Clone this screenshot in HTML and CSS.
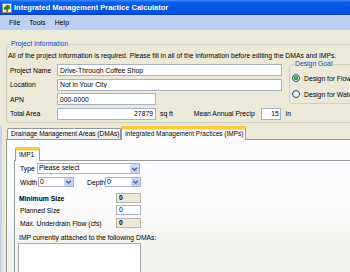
FILE: index.html
```html
<!DOCTYPE html>
<html lang="en">
<head>
    <meta charset="UTF-8">
    <meta name="viewport" content="width=device-width, initial-scale=1.0">
    <title>Integrated Management Practice Calculator</title>
    <link rel="stylesheet" href="styles.css">
</head>
<body>
    <div class="titlebar">
        <svg class="app-icon" width="10" height="10" viewBox="0 0 10 10">
            <rect x="0.5" y="0.5" width="9" height="9" fill="#f3f0e2" stroke="#8c8a7c"/>
            <path d="M1.8 6.2 Q1.2 3.8 3.2 3.4 Q3.8 1.4 5.8 1.9 Q7.9 1.8 8.1 3.8 Q9.1 5.6 7.2 6.4 Q5.6 7.1 4.1 6.6 Q2.5 7.1 1.8 6.2z" fill="#2e8b2a"/>
            <rect x="4.4" y="6" width="1.3" height="3" fill="#7a4b1c"/>
        </svg>
        <span class="title">Integrated Management Practice Calculator</span>
    </div>

    <div class="menubar">
        <span>File</span>
        <span>Tools</span>
        <span>Help</span>
    </div>

    <div class="client">
        <fieldset class="group project">
            <legend>Project Information</legend>
            <p class="intro">All of the project information is required. Please fill in all of the information before editing the DMAs and IMPs.</p>

            <div class="project-grid">
                <div class="fields">
                    <div class="row">
                        <label>Project Name</label>
                        <input class="text wide" value="Drive-Through Coffee Shop">
                    </div>
                    <div class="row">
                        <label>Location</label>
                        <input class="text wide" value="Not in Your City">
                    </div>
                    <div class="row">
                        <label>APN</label>
                        <input class="text short" value="000-0000">
                    </div>
                </div>

                <fieldset class="group goal">
                    <legend>Design Goal</legend>
                    <div class="radio-row"><span class="radio checked"></span>Design for Flow Control</div>
                    <div class="radio-row"><span class="radio"></span>Design for Water Quality</div>
                </fieldset>

                <div class="row area-row">
                    <label>Total Area</label>
                    <input class="text short num" value="27879">
                    <span class="unit">sq ft</span>
                    <span class="precip-label">Mean Annual Precip</span>
                    <input class="text precip num" value="15">
                    <span class="unit-in">in</span>
                </div>
            </div>
        </fieldset>

        <div class="tabs-area">
            <div class="tab-strip">
                <div class="tab dma-tab">Drainage Management Areas (DMAs)</div>
                <div class="tab active imp-tab">Integrated Management Practices (IMPs)</div>
            </div>
            <div class="panel">
                <div class="tab-strip inner">
                    <div class="tab active imp1-tab">IMP1</div>
                </div>
                <div class="inner-panel">
                    <div class="ctl-row">
                        <span class="lbl type-lbl">Type</span>
                        <div class="combo type-combo">
                            <span class="combo-text">Please select</span>
                            <span class="combo-btn"><svg width="7" height="6" viewBox="0 0 7 6"><polyline points="1.2,1.8 3.5,4 5.8,1.8" fill="none" stroke="#4d6185" stroke-width="1.3"/></svg></span>
                        </div>
                    </div>
                    <div class="ctl-row size-row">
                        <span class="lbl width-lbl">Width</span>
                        <div class="combo small-combo">
                            <span class="combo-text">0</span>
                            <span class="combo-btn"><svg width="7" height="6" viewBox="0 0 7 6"><polyline points="1.2,1.8 3.5,4 5.8,1.8" fill="none" stroke="#4d6185" stroke-width="1.3"/></svg></span>
                        </div>
                        <span class="lbl depth-lbl">Depth</span>
                        <div class="combo small-combo">
                            <span class="combo-text">0</span>
                            <span class="combo-btn"><svg width="7" height="6" viewBox="0 0 7 6"><polyline points="1.2,1.8 3.5,4 5.8,1.8" fill="none" stroke="#4d6185" stroke-width="1.3"/></svg></span>
                        </div>
                    </div>

                    <div class="val-row min-row">
                        <span class="val-lbl bold">Minimum Size</span>
                        <span class="val-box readonly">0</span>
                    </div>
                    <div class="val-row planned-row">
                        <span class="val-lbl">Planned Size</span>
                        <span class="val-box editable">0</span>
                    </div>
                    <div class="val-row flow-row">
                        <span class="val-lbl">Max. Underdrain Flow (cfs)</span>
                        <span class="val-box readonly">0</span>
                    </div>

                    <p class="attached">IMP currently attached to the following DMAs:</p>
                    <div class="listbox"></div>
                </div>
            </div>
        </div>
    </div>
</body>
</html>
```

FILE: styles.css
```css
* {
    margin: 0;
    padding: 0;
    box-sizing: border-box;
}

body {
    width: 350px;
    height: 272px;
    overflow: hidden;
    font-family: 'Liberation Sans', Arial, sans-serif;
    font-size: 6.8px;
    line-height: 9px;
    color: #000;
    background: #ece9d8;
}

/* window chrome */
.titlebar {
    height: 15px;
    display: flex;
    align-items: center;
    padding-left: 2px;
    background: linear-gradient(#3d8ef7 0%, #0b5fe8 15%, #0354e4 60%, #0a4fd6 85%, #003fbc 100%);
}

.app-icon {
    margin-right: 2px;
    flex: none;
}

.title {
    color: #fff;
    font-weight: bold;
    font-size: 7.5px;
    white-space: nowrap;
}

.menubar {
    height: 15px;
    display: flex;
    align-items: center;
    gap: 9px;
    padding-left: 9px;
    font-size: 7px;
    background: #bdd0f3;
}

.client {
    padding: 10px 0 0 6px;
}

/* group boxes */
.group {
    border: 1px solid #d0d0bf;
    border-radius: 3px;
    min-width: 0;
}

.group legend {
    color: #0046d5;
    line-height: 8px;
    padding: 0 1px;
}

.project {
    width: 420px;
    padding: 3px 1px 2.5px;
}

.project legend {
    margin-left: 2px;
}

.intro {
    white-space: nowrap;
}

.project-grid {
    display: grid;
    grid-template-columns: 281px 130px;
    row-gap: 2.5px;
    margin-top: 4px;
}

.fields {
    display: flex;
    flex-direction: column;
    gap: 2.5px;
}

.row {
    display: flex;
    align-items: center;
    height: 12px;
    white-space: nowrap;
}

.row label {
    width: 49px;
    padding-left: 2px;
}

.text {
    height: 12px;
    font: inherit;
    color: #000;
    padding: 0 2px;
    border: 1px solid #a7b3c5;
    background: #fff;
    outline: none;
}

.wide {
    width: 225px;
}

.short {
    width: 99px;
}

.num {
    text-align: right;
}

.unit {
    margin-left: 4px;
}

.precip-label {
    margin-left: 21px;
}

.precip {
    width: 20px;
    margin-left: 6px;
    padding: 0 1px;
}

.unit-in {
    margin-left: 5px;
}

.area-row {
    grid-column: 1 / 3;
}

.goal {
    margin-top: -4px;
    height: 44px;
    padding-left: 2px;
}

.goal legend {
    margin-top: 1px;
}

.radio-row {
    display: flex;
    align-items: center;
    gap: 4px;
    height: 10px;
    margin-top: 6px;
    white-space: nowrap;
}

.radio-row:first-of-type {
    margin-top: 5px;
}

.radio {
    width: 8px;
    height: 8px;
    border-radius: 50%;
    border: 1px solid #1c5180;
    background: linear-gradient(135deg, #dcd9cd, #fff);
}

.radio.checked {
    background: radial-gradient(circle, #6ee06a 0, #22a31f 1.4px, #1f8f1d 2px, transparent 2.3px), linear-gradient(135deg, #dcd9cd, #fff);
}

/* tabs */
.tabs-area {
    margin: 3px 0 0 -6px;
    padding-left: 4px;
    border-left: 2px solid #c5d3ee;
    height: 150px;
}

.tab-strip {
    display: flex;
    align-items: flex-end;
    height: 13px;
    padding-left: 1px;
}

.tab {
    height: 11px;
    padding: 0 3px;
    font-size: 6.5px;
    line-height: 10px;
    white-space: nowrap;
    border: 1px solid #919b9c;
    border-bottom: none;
    border-radius: 2px 2px 0 0;
    background: linear-gradient(#fff, #ecebe6);
}

.dma-tab {
    width: 114px;
}

.tab.active {
    position: relative;
    z-index: 1;
    height: 14px;
    margin-bottom: -1px;
    line-height: 10px;
    background: #fcfcfe;
    border-top: 3px solid #ffc83c;
    box-shadow: inset 0 1px 0 #fce7a8;
}

.imp-tab {
    width: 125px;
}

.panel {
    width: 420px;
    height: 140px;
    border: 1px solid #919b9c;
    padding: 9px 0 0 7px;
    background: linear-gradient(#fcfcfe 0, #fcfcfe 60px, #f3f2ec 103px);
}

.tab-strip.inner {
    height: 11px;
}

.imp1-tab {
    width: 25px;
    height: 12px;
    line-height: 8px;
}

.inner-panel {
    height: 120px;
    border: 1px solid #919b9c;
    padding: 2px 0 0 5px;
    background: linear-gradient(#fcfcfe 0, #fcfcfe 40px, #f3f2ec 83px);
}

.ctl-row {
    display: flex;
    align-items: center;
    height: 11px;
    white-space: nowrap;
}

.size-row {
    height: 10px;
    margin-top: 3px;
}

.type-lbl {
    width: 17px;
}

.width-lbl {
    width: 18px;
}

.depth-lbl {
    width: 18px;
    margin-left: 13px;
}

.combo {
    display: flex;
    align-items: stretch;
    height: 100%;
    border: 1px solid #a7b3c5;
    background: #fff;
}

.type-combo {
    width: 103px;
}

.small-combo {
    width: 36px;
}

.combo-text {
    flex: 1;
    padding-left: 1px;
    line-height: 8px;
}

.combo-btn {
    width: 9px;
    display: flex;
    align-items: center;
    justify-content: center;
    border: 1px solid #c7d6f8;
    border-radius: 1px;
    background: linear-gradient(#d2defb, #b4c9f6);
}

.val-row {
    display: flex;
    align-items: center;
    height: 10px;
    white-space: nowrap;
}

.min-row {
    margin-top: 6px;
}

.planned-row {
    margin-top: 2px;
}

.flow-row {
    margin-top: 3px;
}

.val-lbl {
    width: 96px;
}

.bold {
    font-weight: bold;
    margin-left: -1px;
    width: 97px;
}

.val-box {
    width: 25px;
    height: 10px;
    padding-left: 2px;
    line-height: 8px;
    border: 1px solid #b8b7aa;
}

.val-box.readonly {
    background: #ece9d8;
    font-weight: bold;
}

.val-box.editable {
    background: #fff;
    border-color: #a7b3c5;
}

.attached {
    margin-top: 4.5px;
    margin-left: -1px;
    white-space: nowrap;
}

.listbox {
    width: 123px;
    height: 40px;
    margin: 1.5px 0 0 -2px;
    border: 1px solid #a5acb5;
    background: #fff;
}
```
